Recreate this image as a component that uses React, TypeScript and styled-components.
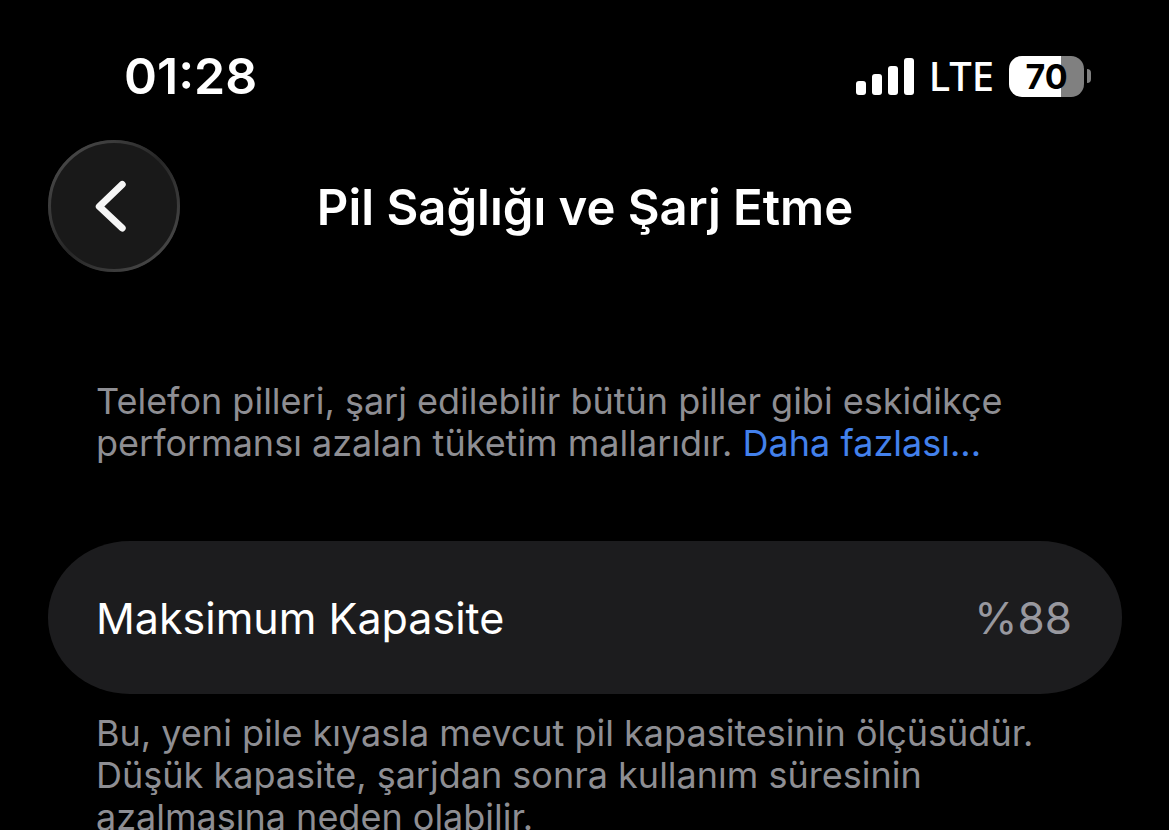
import React from "react";
import styled, { createGlobalStyle } from "styled-components";

const BATTERY_LEVEL = 70;
const SIGNAL_BARS = [14, 21, 29, 37];

const colors = {
  background: "#000000",
  surface: "#1c1c1e",
  button: "#191919",
  text: "#ffffff",
  secondary: "#8e8e93",
  value: "#98989f",
  link: "#4381ec",
  batteryEmpty: "#808080",
};

const App: React.FC = () => (
  <Page>
    <GlobalStyle />
    <StatusBar>
      <Time>01:28</Time>
      <Indicators>
        <Signal>
          {SIGNAL_BARS.map((height) => (
            <SignalBar key={`bar-${height}`} $height={height} />
          ))}
        </Signal>
        <Network>LTE</Network>
        <Battery>
          <BatteryBody $level={BATTERY_LEVEL}>{BATTERY_LEVEL}</BatteryBody>
          <BatteryCap />
        </Battery>
      </Indicators>
    </StatusBar>

    <Header>
      <BackButton type="button" aria-label="Geri">
        <svg width="132" height="132" viewBox="0 0 132 132" fill="none">
          <defs>
            <linearGradient id="rim" x1="0.1" y1="0.1" x2="0.9" y2="0.9">
              <stop offset="0" stopColor="#484848" />
              <stop offset="0.5" stopColor="#262626" />
              <stop offset="1" stopColor="#484848" />
            </linearGradient>
          </defs>
          <circle cx="66" cy="66" r="64.5" stroke="url(#rim)" strokeWidth="3" />
          <path
            d="M74.2 44.500 51.300 66.500 74.200 88"
            stroke="#f5f5f5"
            strokeWidth="7"
            strokeLinecap="round"
            strokeLinejoin="round"
          />
        </svg>
      </BackButton>
      <Title>Pil Sağlığı ve Şarj Etme</Title>
    </Header>

    <Main>
      <Note>
        Telefon pilleri, şarj edilebilir bütün piller gibi eskidikçe performansı
        azalan tüketim mallarıdır. <Link href="#more">Daha fazlası...</Link>
      </Note>
      <Card>
        <Label>Maksimum Kapasite</Label>
        <Value>%88</Value>
      </Card>
      <Note>
        Bu, yeni pile kıyasla mevcut pil kapasitesinin ölçüsüdür. Düşük
        kapasite, şarjdan sonra kullanım süresinin azalmasına neden olabilir.
      </Note>
    </Main>
  </Page>
);

const GlobalStyle = createGlobalStyle`
  * {
    box-sizing: border-box;
  }
  html {
    scrollbar-width: none;
  }
  body {
    margin: 0;
    background: ${colors.background};
    color: ${colors.text};
    font-family: Inter, "Liberation Sans", sans-serif;
  }
`;
const Page = styled.div`
  min-height: 100vh;
  padding: 46px 47px 0 48px;
`;
const StatusBar = styled.div`
  height: 60px;
  padding: 0 31px 0 76px;
  display: flex;
  align-items: center;
  justify-content: space-between;
`;
const Time = styled.time`
  font-size: 50px;
  font-weight: 600;
  line-height: 60px;
`;
const Indicators = styled.div`
  display: flex;
  align-items: center;
  gap: 15px;
`;
const Signal = styled.div`
  display: flex;
  align-items: flex-end;
  gap: 6px;
`;
const SignalBar = styled.span<{ $height: number }>`
  width: 10px;
  height: ${({ $height }) => $height}px;
  border-radius: 3px;
  background: ${colors.text};
`;
const Network = styled.span`
  font-family: "Noto Sans", "Open Sans", sans-serif;
  font-size: 40px;
  font-weight: 500;
  line-height: 60px;
`;
const Battery = styled.div`
  display: flex;
  align-items: center;
  gap: 3px;
`;
const BatteryBody = styled.div<{ $level: number }>`
  width: 75px;
  height: 41px;
  border-radius: 13px;
  background: ${({ $level }) =>
    `linear-gradient(to right, ${colors.text} ${$level}%, ${colors.batteryEmpty} ${$level}%)`};
  color: ${colors.background};
  font-size: 34px;
  font-weight: 700;
  line-height: 41px;
  text-align: center;
`;
const BatteryCap = styled.span`
  width: 4px;
  height: 14px;
  border-radius: 0 4px 4px 0;
  background: ${colors.batteryEmpty};
`;
const Header = styled.header`
  margin-top: 34px;
  display: grid;
  grid-template-columns: 132px 1fr 132px;
  align-items: center;
`;
const BackButton = styled.button`
  width: 132px;
  height: 132px;
  padding: 0;
  border: none;
  border-radius: 50%;
  background: ${colors.button};
  cursor: pointer;

  svg {
    display: block;
  }
`;
const Title = styled.h1`
  margin: 0;
  padding-top: 4px;
  font-size: 49px;
  font-weight: 600;
  line-height: 60px;
  text-align: center;
`;
const Main = styled.main`
  padding-top: 108px;
`;
const Note = styled.p`
  max-width: 1040px;
  margin: 0;
  padding: 0 48px;
  color: ${colors.secondary};
  font-size: 36px;
  line-height: 42px;
`;
const Link = styled.a`
  color: ${colors.link};
  text-decoration: none;
`;
const Card = styled.section`
  margin: 77px 0 18px;
  padding: 49px 50px 47px 48px;
  display: flex;
  align-items: center;
  justify-content: space-between;
  border-radius: 82px / 76px;
  background: ${colors.surface};
  line-height: 57px;
`;
const Label = styled.span`
  color: ${colors.text};
  font-size: 43px;
`;
const Value = styled.span`
  color: ${colors.value};
  font-size: 44px;
`;

export default App;
